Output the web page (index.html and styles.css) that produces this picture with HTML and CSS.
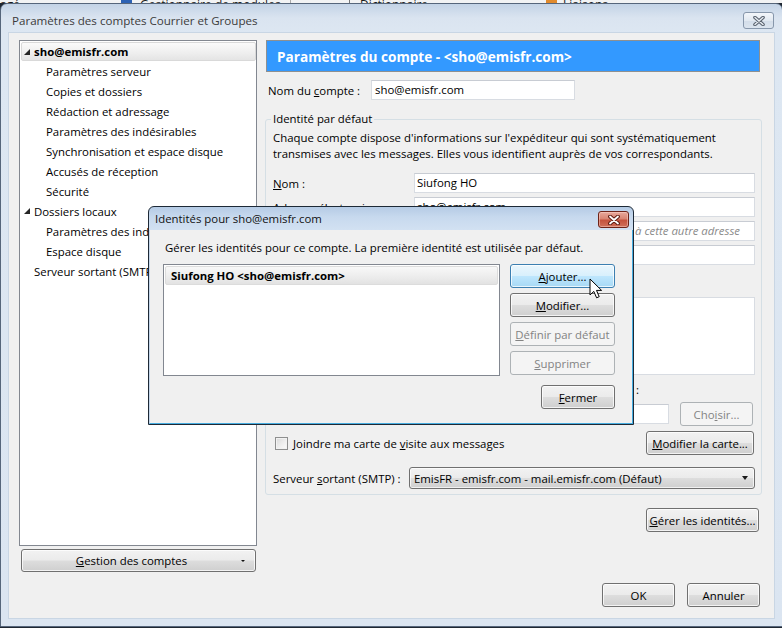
FILE: index.html
```html
<!DOCTYPE html>
<html lang="fr">
<head>
<meta charset="utf-8">
<title>Paramètres des comptes Courrier et Groupes</title>
<link rel="stylesheet" href="styles.css">
</head>
<body>
<div class="taskstrip">
  <span class="frag f1">agé</span>
  <span class="tico tico-blue"></span>
  <span class="frag f2">Gestionnaire de modules</span>
  <span class="tmark"></span>
  <span class="frag f3">Dictionnaire</span>
  <span class="tico tico-orange"></span>
  <span class="frag f4">Liaisons</span>
</div>

<div class="window">
  <div class="titlebar">
    <span class="wtitle">Paramètres des comptes Courrier et Groupes</span>
    <span class="wclose">
      <svg width="14" height="10" viewBox="0 0 14 10"><path d="M3 1.5 L11 8.5 M11 1.5 L3 8.5" stroke="#59626e" stroke-width="3.6" stroke-linecap="round"/><path d="M3 1.5 L11 8.5 M11 1.5 L3 8.5" stroke="#e9eef4" stroke-width="1.4" stroke-linecap="round"/></svg>
    </span>
  </div>

  <div class="client">
    <div class="leftcol">
      <div class="tree">
        <div class="trow top sel"><span class="twisty"><svg width="7" height="7" viewBox="0 0 7 7"><polygon points="6,0 6,6 0,6" fill="#262626"/></svg></span><b>sho@emisfr.com</b></div>
        <div class="trow child">Paramètres serveur</div>
        <div class="trow child">Copies et dossiers</div>
        <div class="trow child">Rédaction et adressage</div>
        <div class="trow child">Paramètres des indésirables</div>
        <div class="trow child">Synchronisation et espace disque</div>
        <div class="trow child">Accusés de réception</div>
        <div class="trow child">Sécurité</div>
        <div class="trow top"><span class="twisty"><svg width="7" height="7" viewBox="0 0 7 7"><polygon points="6,0 6,6 0,6" fill="#262626"/></svg></span>Dossiers locaux</div>
        <div class="trow child">Paramètres des indésirables</div>
        <div class="trow child">Espace disque</div>
        <div class="trow plain">Serveur sortant (SMTP)</div>
      </div>
      <div class="btn menubtn"><span class="mtext"><u>G</u>estion des comptes</span><span class="marrow"><span class="tri-small"></span></span></div>
    </div>

    <div class="rightcol">
      <div class="header">Paramètres du compte - &lt;sho@emisfr.com&gt;</div>
      <div class="acctrow">
        <span class="acctlbl">Nom du <u>c</u>ompte :</span>
        <div class="field acct">sho@emisfr.com</div>
      </div>

      <fieldset class="group">
        <legend>Identité par défaut</legend>
        <p class="desc">Chaque compte dispose d'informations sur l'expéditeur qui sont systématiquement<br>transmises avec les messages. Elles vous identifient auprès de vos correspondants.</p>
        <div class="frow first"><span class="flbl"><u>N</u>om :</span><div class="field">Siufong HO</div></div>
        <div class="frow"><span class="flbl"><u>A</u>dresse électronique :</span><div class="field">sho@emisfr.com</div></div>
        <div class="frow"><span class="flbl">Adresse de <u>r</u>éponse :</span><div class="field ph">Les destinataires répondront à cette autre adresse</div></div>
        <div class="frow"><span class="flbl">Or<u>g</u>anisation :</span><div class="field"></div></div>
        <div class="sigrow"><span class="flbl">Te<u>x</u>te de signature :</span><span class="cb"></span><span class="cbtext">Utiliser HTML (p. ex. : &lt;b&gt;Gras&lt;/b&gt;)</span></div>
        <div class="sigarea"></div>
        <div class="filelbl"><span class="cb"></span><span class="cbtext">Joindre la signature à partir d'un fichier (texte, HTML ou image) :</span></div>
        <div class="filerow"><div class="field filefield"></div><button class="btn dis choose">Cho<u>i</u>sir...</button></div>
        <div class="vcardrow"><span class="cb"></span><span class="cbtext">Joindre ma carte de <u>v</u>isite aux messages</span><button class="btn vcardbtn"><u>M</u>odifier la carte...</button></div>
        <div class="smtprow"><span class="smtplbl">Serveur <u>s</u>ortant (SMTP) :</span><div class="select"><span>EmisFR - emisfr.com - mail.emisfr.com (Défaut)</span><span class="tri"></span></div></div>
      </fieldset>

      <button class="btn idbtn"><u>G</u>érer les identités...</button>

      <div class="footer">
        <button class="btn okbtn">OK</button>
        <button class="btn okbtn">Annuler</button>
      </div>
    </div>
  </div>
</div>

<div class="dialog">
  <div class="dtitle">
    <span class="dtitletext">Identités pour sho@emisfr.com</span>
    <span class="dclose">
      <svg width="14" height="10" viewBox="0 0 14 10"><path d="M3 1.5 L11 8.5 M11 1.5 L3 8.5" stroke="#5d1a10" stroke-width="3.8" stroke-linecap="round"/><path d="M3 1.5 L11 8.5 M11 1.5 L3 8.5" stroke="#ffffff" stroke-width="1.8" stroke-linecap="round"/></svg>
    </span>
  </div>
  <div class="dclient">
    <p class="dmsg">Gérer les identités pour ce compte. La première identité est utilisée par défaut.</p>
    <div class="dbody">
      <div class="idlist">
        <div class="idrow">Siufong HO &lt;sho@emisfr.com&gt;</div>
      </div>
      <div class="dbtns">
        <button class="btn hover"><u>A</u>jouter...</button>
        <button class="btn"><u>M</u>odifier...</button>
        <button class="btn dis"><u>D</u>éfinir par défaut</button>
        <button class="btn dis"><u>S</u>upprimer</button>
        <button class="btn close"><u>F</u>ermer</button>
      </div>
    </div>
  </div>
</div>

<svg class="cursor" width="14" height="22" viewBox="0 0 14 22"><path d="M1 1 L1 17 L4.8 13.4 L7.6 19.8 L10.2 18.7 L7.5 12.4 L12.6 12.4 Z" fill="#fff" stroke="#000" stroke-width="1" stroke-linejoin="miter"/></svg>
</body>
</html>
```

FILE: styles.css
```css
* { box-sizing: border-box; }

html, body {
  margin: 0;
  padding: 0;
}

body {
  width: 782px;
  height: 628px;
  overflow: hidden;
  position: relative;
  background: #1e2732;
  font-family: "Open Sans", "Noto Sans", "DejaVu Sans", sans-serif;
  font-size: 11.4px;
  color: #000;
}

u { text-decoration: underline; text-underline-offset: 1px; }

/* strip of taskbar behind the window */
.taskstrip {
  height: 3px;
  overflow: hidden;
  display: flex;
  align-items: flex-end;
  background: #f2f3f4;
  white-space: nowrap;
}
.frag {
  font-size: 12px;
  line-height: 12px;
  height: 12px;
  margin-bottom: -8px;
  color: #1a1a1a;
}
.f1 { margin-left: 0; width: 115px; }
.f2 { margin-left: 8px; width: 150px; }
.f3 { margin-left: 10px; width: 180px; }
.f4 { margin-left: 6px; }
.tico { width: 11px; height: 3px; margin-left: 6px; }
.tico-blue { background: #2c62b4; }
.tico-orange { background: #e18a2c; }
.tmark { width: 60px; height: 3px; border-left: 1px solid #aaa; border-right: 1px solid #777; }

/* main window */
.window {
  width: 783px;
  border: 1px solid #56667b;
  border-radius: 7px 7px 0 0;
  background: linear-gradient(180deg, #c3d3e6 0px, #dae4f0 14px, #dde7f2 30px, #dbe5f1 100%);
  padding: 0 7px 7px 7px;
}

.titlebar {
  height: 28px;
  display: flex;
  align-items: flex-start;
  justify-content: space-between;
}
.wtitle {
  margin-left: 4px;
  margin-top: 3px;
  line-height: 28px;
  color: #3b3b3b;
  font-size: 11.6px;
}
.wclose {
  margin-top: 8px;
  margin-right: 1px;
  width: 31px;
  height: 17px;
  border: 1px solid #8797ab;
  border-radius: 3px;
  background: linear-gradient(180deg, #f3f6fa 0%, #e2e9f1 50%, #d3dde9 51%, #dbe4ee 100%);
  display: flex;
  align-items: center;
  justify-content: center;
}

.client {
  height: 587px;
  border: 1px solid #c9d6e4;
  background: #f0f0f0;
  display: flex;
  padding: 7px 12px 11px 10px;
}

/* left column */
.leftcol {
  width: 238px;
  display: flex;
  flex-direction: column;
}
.tree {
  height: 506px;
  border: 1px solid #828790;
  background: #fff;
  padding-top: 0;
}
.trow {
  height: 20px;
  line-height: 21px;
  white-space: nowrap;
  overflow: hidden;
}
.trow.child { padding-left: 26px; }
.trow.plain { padding-left: 14px; }
.trow.top { padding-left: 4px; display: flex; align-items: center; }
.twisty { width: 7px; height: 7px; margin-right: 3px; display: inline-flex; margin-top: 1px; }
.twisty svg { display: block; }
.trow.sel {
  height: 19px;
  margin: 1px 0 0 1px;
  border: 1px solid #d9d9d9;
  border-radius: 2px;
  padding-left: 2px;
  line-height: 17px;
  background: linear-gradient(180deg, #fafafa 0%, #eeeeee 60%, #e4e4e4 100%);
}

/* buttons */
.btn {
  font: inherit;
  color: #000;
  height: 24px;
  border: 1px solid #707070;
  border-radius: 3px;
  background: linear-gradient(180deg, #f2f2f2 0%, #ebebeb 48%, #dddddd 52%, #cfcfcf 100%);
  box-shadow: inset 0 0 0 1px rgba(255,255,255,0.75);
  padding: 0 6px;
  display: flex;
  align-items: center;
  justify-content: center;
  white-space: nowrap;
}
.btn.dis {
  border-color: #adb2b5;
  background: #f4f4f4;
  color: #838383;
  box-shadow: none;
}
.btn.hover {
  border-color: #3c7fb1;
  background: linear-gradient(180deg, #eaf6fd 0%, #d9f0fc 48%, #bee6fd 52%, #a7d9f5 100%);
}

.menubtn {
  margin: 3px 1px 0 2px;
  height: 23px;
  padding: 0;
  justify-content: flex-start;
}
.mtext { flex: 1; text-align: center; padding-left: 12px; }
.marrow { width: 26px; display: flex; justify-content: center; align-items: center; }
.tri-small {
  width: 0; height: 0;
  border-left: 2px solid transparent;
  border-right: 2px solid transparent;
  border-top: 2px solid #111;
  margin-left: 1px;
}

/* right column */
.rightcol {
  flex: 1;
  margin-left: 8px;
  display: flex;
  flex-direction: column;
  min-width: 0;
}
.header {
  margin: 0 2px 0 1px;
  height: 32px;
  border: 1px solid #8e9091;
  background: #3399ff;
  color: #fff;
  font-weight: 700;
  font-size: 13.6px;
  line-height: 31px;
  padding-left: 10px;
  white-space: nowrap;
}
.acctrow {
  margin-top: 8px;
  height: 20px;
  display: flex;
  align-items: center;
}
.acctlbl { margin-left: 3px; width: 103px; white-space: nowrap; }

.field {
  height: 20px;
  border: 1px solid #d8dce2;
  border-top-color: #c8ccd3;
  background: #fff;
  padding-left: 2px;
  line-height: 18px;
  white-space: nowrap;
  overflow: hidden;
}
.field.acct { width: 204px; padding-left: 3px; }
.field.ph { color: #8a8a8a; font-style: italic; text-align: right; padding-right: 14px; }

.group {
  margin: 11px 0 0 0;
  padding: 3px 6px 5px 7px;
  border: 1px solid #d5dfe5;
  border-radius: 3px;
  min-width: 0;
}
.group legend {
  padding: 0 2px;
  margin-left: -2px;
  line-height: 16px;
}
.desc {
  margin: 0;
  line-height: 16px;
  white-space: nowrap;
}
.frow {
  margin-top: 4px;
  height: 20px;
  display: flex;
  align-items: center;
}
.frow.first { margin-top: 11px; }
.flbl { width: 141px; white-space: nowrap; flex: none; }
.frow .field { flex: 1; }

.sigrow {
  margin-top: 8px;
  height: 20px;
  display: flex;
  align-items: center;
  white-space: nowrap;
}
.sigrow .flbl { width: 117px; }
.sigarea {
  margin-top: 4px;
  height: 78px;
  border: 1px solid #d8dce2;
  background: #fff;
}
.cb {
  width: 13px;
  height: 13px;
  flex: none;
  border: 1px solid #8e8f8f;
  background: linear-gradient(135deg, #d9d9d9 0%, #f0f0f0 60%, #fbfbfb 100%);
  box-shadow: inset 0 0 0 1px #f2f2f2;
}
.cbtext { margin-left: 5px; white-space: nowrap; }

.filelbl {
  margin-top: 5px;
  height: 18px;
  width: 366px;
  display: flex;
  align-items: center;
  justify-content: flex-end;
  white-space: nowrap;
}
.filerow {
  margin-top: 4px;
  height: 24px;
  display: flex;
  align-items: center;
}
.filefield { margin-left: 18px; flex: 1; height: 20px; }
.choose { margin-left: 11px; margin-right: 2px; width: 73px; }

.vcardrow {
  margin-top: 5px;
  height: 24px;
  display: flex;
  align-items: center;
}
.vcardrow .cb { margin-left: 2px; }
.vcardbtn { margin-left: auto; margin-right: 1px; width: 108px; }

.smtprow {
  margin-top: 12px;
  height: 22px;
  display: flex;
  align-items: center;
}
.smtplbl { width: 136px; white-space: nowrap; flex: none; }
.select {
  flex: 1;
  height: 22px;
  border: 1px solid #707070;
  border-radius: 3px;
  background: linear-gradient(180deg, #f2f2f2 0%, #ebebeb 48%, #dddddd 52%, #cfcfcf 100%);
  box-shadow: inset 0 0 0 1px rgba(255,255,255,0.7);
  display: flex;
  align-items: center;
  justify-content: space-between;
  padding: 0 4px 0 4px;
  white-space: nowrap;
}
.tri {
  width: 0; height: 0;
  border-left: 3.5px solid transparent;
  border-right: 3.5px solid transparent;
  border-top: 4px solid #1a1a1a;
  margin-right: 2px;
}

.idbtn {
  margin-top: 13px;
  align-self: flex-end;
  margin-right: 3px;
  width: 113px;
}

.footer {
  margin-top: auto;
  display: flex;
  justify-content: flex-end;
  gap: 12px;
  margin-right: 2px;
}
.okbtn { width: 73px; }

/* dialog overlay */
.dialog {
  position: absolute;
  left: 148px;
  top: 206px;
  width: 486px;
  height: 219px;
  border: 1px solid #1d2936;
  border-radius: 6px 6px 0 0;
  background: linear-gradient(180deg, #b5cbe5 0px, #c7d9ee 10px, #d2e1f2 23px, #d8e5f3 100%);
  display: flex;
  flex-direction: column;
}
.dtitle {
  height: 23px;
  display: flex;
  align-items: flex-start;
  justify-content: space-between;
  flex: none;
}
.dtitletext {
  margin-left: 6px;
  line-height: 23px;
  color: #111;
}
.dclose {
  margin-top: 4px;
  margin-right: 4px;
  width: 31px;
  height: 17px;
  border: 1px solid #6e2318;
  border-radius: 3px;
  background: linear-gradient(180deg, #e8a99c 0%, #d98573 45%, #c5523d 55%, #d0705a 100%);
  box-shadow: inset 0 0 0 1px rgba(255,220,210,0.45);
  display: flex;
  align-items: center;
  justify-content: center;
}
.dclient {
  flex: 1;
  background: #f0f0f0;
  border-left: 1px solid #c4d6ea;
  border-right: 1px solid #46ade0;
  border-bottom: 1px solid #46ade0;
  padding: 10px 0 0 13px;
}
.dmsg {
  margin: 0 0 0 2px;
  line-height: 16px;
  white-space: nowrap;
}
.dbody {
  margin-top: 8px;
  display: flex;
  align-items: flex-start;
}
.idlist {
  width: 337px;
  height: 112px;
  border: 1px solid #828790;
  background: #fff;
  padding: 0 1px;
}
.idrow {
  margin-top: 1px;
  height: 19px;
  line-height: 17px;
  border: 1px solid #dcdcdc;
  border-radius: 2px;
  background: linear-gradient(180deg, #f8f8f8 0%, #ececec 60%, #e2e2e2 100%);
  padding-left: 5px;
  font-weight: 700;
  white-space: nowrap;
}
.dbtns {
  margin-left: 10px;
  width: 105px;
  display: flex;
  flex-direction: column;
  gap: 5px;
}
.dbtns .btn { width: 105px; }
.dbtns .btn.close { width: 74px; align-self: flex-end; margin-top: 5px; }

.cursor {
  position: absolute;
  left: 589px;
  top: 278px;
}
```
